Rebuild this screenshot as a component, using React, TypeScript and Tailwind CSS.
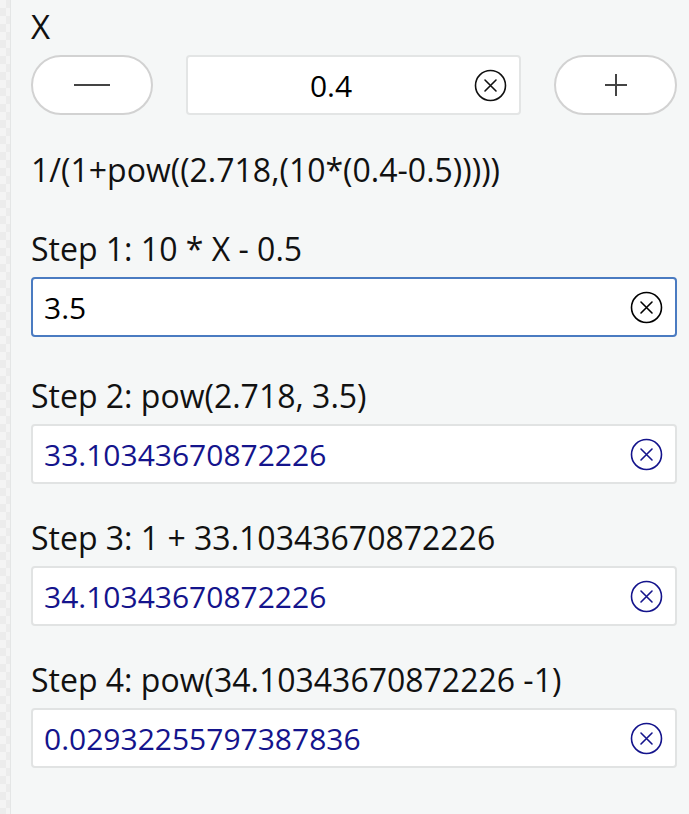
import { ReactNode } from "react";

const font = "font-['Open_Sans',sans-serif]";

function ClearIcon({ color = "#111" }: { color?: string }) {
  return (
    <svg width="33" height="33" viewBox="0 0 33 33" fill="none" stroke={color} strokeWidth="1.6">
      <circle cx="16.5" cy="16.5" r="15" />
      <path d="M11 11 L22 22 M22 11 L11 22" strokeLinecap="round" />
    </svg>
  );
}

function Field({ value, focused, dark }: { value: string; focused?: boolean; dark?: boolean }) {
  const tone = dark ? "#000" : "#14148c";
  return (
    <div
      className={
        "flex h-[60px] items-center rounded-[4px] bg-white pl-[11px] pr-[12px] " +
        (focused ? "border-2 border-[#4a7bc1]" : "border-2 border-[#e1e3e3]")
      }
    >
      <span className={"flex-1 text-[30px] " + (dark ? "text-black" : "text-[#14148c]")}>{value}</span>
      <ClearIcon color={tone} />
    </div>
  );
}

function Step({ label, children, top }: { label: string; children: ReactNode; top: string }) {
  return (
    <div className={top}>
      <div className="h-[40px] text-[32px] leading-[40px] text-[#111]">{label}</div>
      <div className="mt-[8px]">{children}</div>
    </div>
  );
}

export default function App() {
  return (
    <div className={"flex min-h-screen bg-[#f5f7f7] " + font}>
      <div className="w-[11px] shrink-0 border-r border-[#e4e6e6] bg-[repeating-conic-gradient(#ececec_0_25%,#f4f4f4_0_50%)] bg-[length:12px_16px]" />
      <div className="flex-1 pl-[20px] pr-[12px] pt-[7px] pb-[40px]">
        <div className="h-[40px] text-[33px] leading-[40px] text-[#111]">X</div>

        <div className="mt-[8px] flex h-[60px] gap-[33px]">
          <button className="flex w-[122px] items-center justify-center rounded-full border-2 border-[#d2d2d2] bg-white">
            <span className="block h-[2px] w-[36px] bg-[#444]" />
          </button>
          <div className="flex flex-1 items-center rounded-[4px] border-2 border-[#e3e5e5] bg-white pr-[12px]">
            <span className="flex-1 text-center text-[30px] text-black">0.4</span>
            <ClearIcon />
          </div>
          <button className="relative flex w-[123px] items-center justify-center rounded-full border-2 border-[#d2d2d2] bg-white">
            <span className="block h-[2px] w-[22px] bg-[#444]" />
            <span className="absolute h-[22px] w-[2px] bg-[#444]" />
          </button>
        </div>

        <div className="mt-[35px] h-[40px] text-[32px] leading-[40px] text-[#111]">1/(1+pow((2.718,(10*(0.4-0.5)))))</div>

        <Step label="Step 1: 10 * X - 0.5" top="mt-[39px]">
          <Field value="3.5" focused dark />
        </Step>
        <Step label="Step 2: pow(2.718, 3.5)" top="mt-[39px]">
          <Field value="33.10343670872226" />
        </Step>
        <Step label="Step 3: 1 + 33.10343670872226" top="mt-[34px]">
          <Field value="34.10343670872226" />
        </Step>
        <Step label="Step 4: pow(34.10343670872226 -1)" top="mt-[34px]">
          <Field value="0.02932255797387836" />
        </Step>
      </div>
    </div>
  );
}
